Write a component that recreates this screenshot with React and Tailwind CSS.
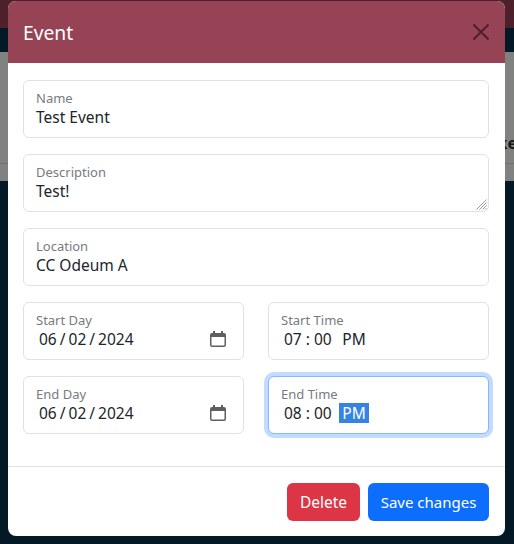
import React from "react";

const font = { fontFamily: '"Noto Sans", sans-serif' };

const CalendarIcon = () => (
  <svg width="16" height="16" viewBox="0 0 16 16" className="shrink-0">
    <path
      fill="#5f5f63"
      d="M3 0h2v2h6V0h2v2h1a2 2 0 0 1 2 2v10a2 2 0 0 1-2 2H2a2 2 0 0 1-2-2V4a2 2 0 0 1 2-2h1V0zM1.5 6v8c0 .3.2.5.5.5h12c.3 0 .5-.2.5-.5V6h-13z"
    />
  </svg>
);

const Field = ({ label, focused, children }) => (
  <div
    className={`flex h-[58px] flex-col rounded-md border bg-white pl-3 pr-[12px] pt-[10px] ${
      focused
        ? "border-[#86b7fe] shadow-[0_0_0_4px_#c2dbfe]"
        : "border-[#dee2e6]"
    }`}
  >
    <div className="text-[13px] leading-[15px] text-[#777b80]">{label}</div>
    <div className="text-[15.5px] leading-[22px] text-[#212529]">{children}</div>
  </div>
);

const DateValue = () => (
  <div className="flex items-center justify-between pl-[3px] pr-[5px] [word-spacing:-1px]">
    <span>06 / 02 / 2024</span>
    <CalendarIcon />
  </div>
);

const TimeValue = ({ time, selected }) => (
  <div className="flex items-center pl-[3px]">
    <span className="w-[52px]">{time}</span>
    <span
      className={`ml-[3px] h-[20px] w-[30px] text-center leading-[20px] ${
        selected ? "bg-[#3584e4] text-white" : ""
      }`}
    >
      PM
    </span>
  </div>
);

const App = () => {
  return (
    <div className="relative h-[544px] w-[514px] overflow-hidden" style={font}>
      {/* page behind the backdrop */}
      <div className="h-[28px] bg-[#4d212b]" />
      <div className="h-[24px] bg-[#031a26]" />
      <div className="h-[129px] bg-[#808280]">
        <div className="h-[112px] border-b border-[#6f716f] pt-[79px] text-right text-[16px] font-bold leading-[24px] text-[#14181b]">
          <span className="relative left-[3px]">ke</span>
        </div>
      </div>
      <div className="h-[363px] bg-[#031a26]" />

      {/* modal */}
      <div className="absolute left-[8px] top-[1px] flex h-[535px] w-[497px] flex-col overflow-hidden rounded-lg bg-white">
        <div className="flex h-[62px] shrink-0 items-center justify-between bg-[#964355] pl-[15px] pr-[16px] text-[19.25px] text-white">
          <span className="pt-[2px]">Event</span>
          <svg width="16" height="16" viewBox="0 0 16 16">
            <path d="M0.5 0.5l15 15M15.5 0.5l-15 15" stroke="#4d212b" strokeWidth="2" fill="none" />
          </svg>
        </div>

        <div className="flex flex-1 flex-col gap-4 pl-[15px] pr-[16px] pt-[17px]">
          <Field label="Name">Test Event</Field>
          <div className="relative">
            <Field label="Description">Test!</Field>
            <svg width="11" height="11" viewBox="0 0 11 11" className="absolute bottom-[2px] right-[2px]">
              <path d="M10.5 0.5L0.5 10.5M10.5 3.5L3.5 10.5M10.5 6.5L6.5 10.5M10.5 9L9 10.5" stroke="#9a9a9a" strokeWidth="1" fill="none" />
            </svg>
          </div>
          <Field label="Location">CC Odeum A</Field>
          <div className="grid grid-cols-2 gap-x-6 gap-y-4">
            <Field label="Start Day"><DateValue /></Field>
            <Field label="Start Time"><TimeValue time="07 : 00" /></Field>
            <Field label="End Day"><DateValue /></Field>
            <Field label="End Time" focused><TimeValue time="08 : 00" selected /></Field>
          </div>
        </div>

        <div className="flex h-[70px] shrink-0 items-start justify-end gap-[8px] border-t border-[#dee2e6] px-[16px] pt-[16px]">
          <button className="h-[38px] w-[73px] rounded-md bg-[#dc3545] pt-[1px] text-[15.5px] text-white">Delete</button>
          <button className="h-[38px] w-[121px] rounded-md bg-[#0d6efd] text-[15px] text-white">Save changes</button>
        </div>
      </div>
    </div>
  );
};

export default App;
